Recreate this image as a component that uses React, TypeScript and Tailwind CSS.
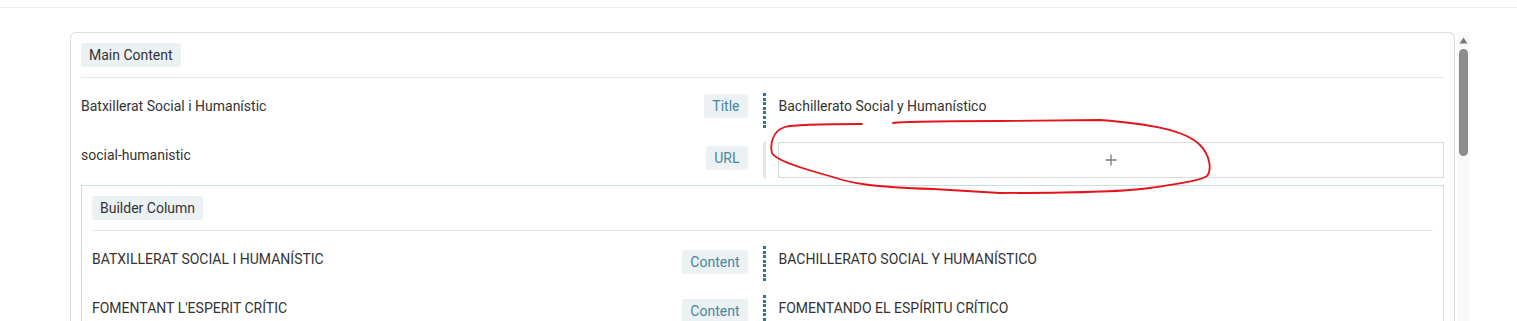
import React from "react";

const font = { fontFamily: "Roboto, 'Noto Sans', Arial, sans-serif" };

function Badge({ children, teal, className = "" }: { children: React.ReactNode; teal?: boolean; className?: string }) {
  return (
    <span
      className={`inline-block rounded-[3px] bg-[#ecf2f4] px-2 text-[14px] leading-[24px] ${teal ? "text-[#4786a0]" : "text-[#333333]"} ${className}`}
    >
      {children}
    </span>
  );
}

function Dotted() {
  return (
    <div className="h-[37px] w-[3px] shrink-0 bg-[repeating-linear-gradient(to_bottom,#2c7a8c_0px,#2c7a8c_3px,transparent_3px,transparent_4.6px)]" />
  );
}

function Row({ left, label, right, badgeTop = "mt-[4px]" }: { left: string; label: string; right: string; badgeTop?: string }) {
  return (
    <div className="grid grid-cols-2 py-[6px]">
      <div className="flex items-start justify-between pr-[15px]">
        <span className="mt-[3px] text-[14px] leading-[20px] text-[#333333]">{left}</span>
        <Badge teal className={badgeTop}>{label}</Badge>
      </div>
      <div className="flex items-start">
        <Dotted />
        <span className="mt-[3px] pl-[13px] text-[14px] leading-[20px] text-[#333333]">{right}</span>
      </div>
    </div>
  );
}

function UrlRow() {
  return (
    <div className="grid grid-cols-2 py-[6px]">
      <div className="flex items-start justify-between pr-[15px]">
        <span className="mt-[3px] text-[14px] leading-[20px] text-[#333333]">social-humanistic</span>
        <Badge teal className="mt-[4px]">URL</Badge>
      </div>
      <div className="flex items-start">
        <div className="h-[36px] w-[3px] shrink-0 bg-[#e6e6e6]" />
        <div className="ml-[12px] flex h-[36px] flex-1 items-center justify-center border border-[#d6dcdc] bg-white">
          <svg width="12" height="12" viewBox="0 0 12 12">
            <path d="M6 0.5V11.5M0.5 6H11.5" stroke="#7a7a7a" strokeWidth="1.3" />
          </svg>
        </div>
      </div>
    </div>
  );
}

function Header({ title }: { title: string }) {
  return (
    <div className="pt-[10px]">
      <Badge>{title}</Badge>
      <div className="mt-[10px] mb-[9px] h-px bg-[#e6e8e8]" />
    </div>
  );
}

export default function App() {
  return (
    <div style={font} className="relative h-[321px] w-full overflow-hidden bg-white">
      <div className="h-[8px] border-b border-[#e8eeee]" />
      <div className="mt-[24px] flex gap-[2px] pl-[70px] pr-[47px]">
        <div className="flex-1 rounded-t-[6px] border border-b-0 border-[#d9dddd] px-[10px]">
          <Header title="Main Content" />
          <Row left="Batxillerat Social i Humanístic" label="Title" right="Bachillerato Social y Humanístico" badgeTop="mt-[1px]" />
          <UrlRow />
          <div className="mt-[1px] border border-b-0 border-[#c9dfe3] px-[10px]">
            <Header title="Builder Column" />
            <Row left="BATXILLERAT SOCIAL I HUMANÍSTIC" label="Content" right="BACHILLERATO SOCIAL Y HUMANÍSTICO" />
            <Row left="FOMENTANT L'ESPERIT CRÍTIC" label="Content" right="FOMENTANDO EL ESPÍRITU CRÍTICO" />
          </div>
        </div>
        <div className="flex h-[300px] w-[13px] flex-col items-center bg-[#f9f9f9]">
          <svg width="9" height="7" viewBox="0 0 9 7" className="mt-[5px]">
            <path d="M4.5 0.5L8.5 6.5H0.5Z" fill="#7a7a7a" />
          </svg>
          <div className="mt-[5px] h-[107px] w-[9px] rounded-full bg-[#8c8c8c]" />
        </div>
      </div>
      <svg className="pointer-events-none absolute left-0 top-0" width="1517" height="321" viewBox="0 0 1517 321">
        <path
          d="M862,124 C830,124 795,124 785,127 C772,131 770,145 772,153 C775,160 800,168 833,177 C850,183 870,187 933,189 L1000,193 C1080,193 1130,191 1150,188 C1180,183 1200,181 1207,176 C1212,170 1210,155 1200,145 C1185,130 1150,124 1100,120 L1000,121 C950,121 900,122 893,123"
          fill="none"
          stroke="#e3141b"
          strokeWidth="1.8"
          strokeLinecap="round"
        />
      </svg>
    </div>
  );
}
